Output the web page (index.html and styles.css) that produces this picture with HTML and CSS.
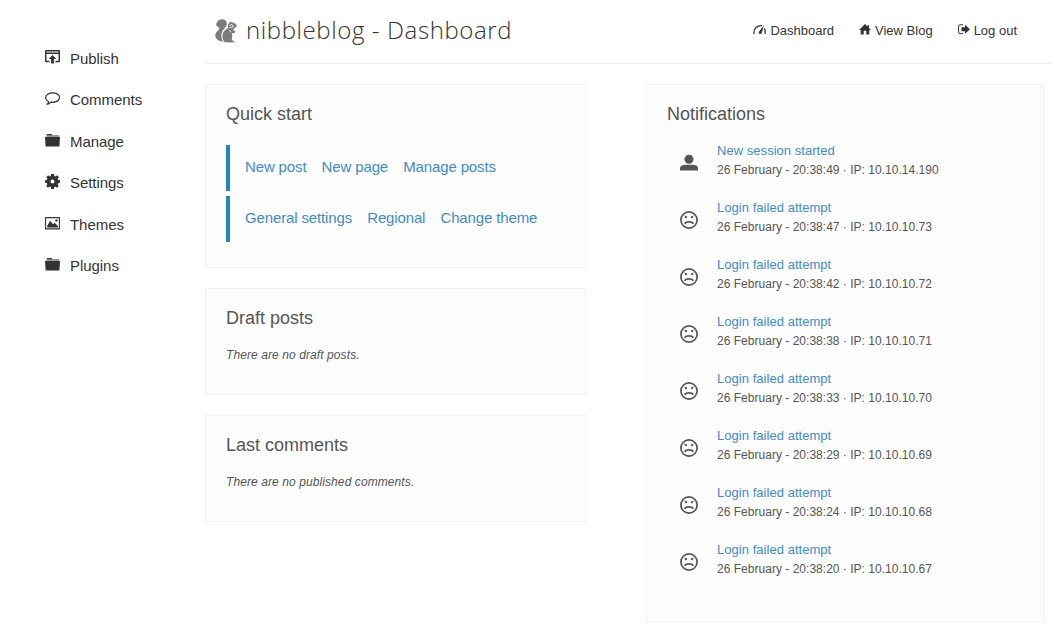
FILE: index.html
```html
<!DOCTYPE html>
<html lang="en">
<head>
<meta charset="utf-8">
<title>nibbleblog - Dashboard</title>
<link rel="stylesheet" href="styles.css">
</head>
<body>
<svg class="defs" aria-hidden="true">
  <symbol id="folder" viewBox="0 0 15 13"><path fill="#999" d="M1.500 2.500V1L2.200 0H6.500L7.300 1H13.800L14.300 1.500V3.500H1.500z"/><path d="M1.500 1.200L2.200 0H6.500L7.200 1.200zM0 3H15L14.400 12.500H.6z"/></symbol>
  <symbol id="sad" viewBox="0 0 18 18"><circle cx="9" cy="9" r="8.100" fill="none" stroke="currentColor" stroke-width="1.700"/><circle cx="6" cy="6.200" r="1.150"/><circle cx="12" cy="6.200" r="1.150"/><path d="M3.700 4.700l2 .8M14.300 4.700l-2 .8" stroke="currentColor" stroke-width=".6"/><path d="M4.800 12.800C6 10.200 12 10.200 13.200 12.800" fill="none" stroke="currentColor" stroke-width="1.600"/></symbol>
</svg>
<div class="layout">
  <nav class="sidebar">
    <a class="side-link"><svg class="side-icon raised" viewBox="0 0 15 14"><path fill="none" stroke="currentColor" stroke-width="1.500" d="M4.500 11.500H1.200Q.7 11.500.7 11V1.200Q.7.700 1.200.7H13.800Q14.300.7 14.300 1.200V11Q14.300 11.500 13.800 11.500H10.500M1 3.300H14"/><path d="M7.500 5L11.300 9H8.900V13.500H6.100V9H3.700z"/></svg>Publish</a>
    <a class="side-link"><svg class="side-icon" viewBox="0 0 15 14"><path fill="none" stroke="currentColor" stroke-width="1.200" d="M3.600 9.700C-.3 8-.2 4 2.800 2.200C6 .2 11 .5 13.300 2.700C15.300 4.700 14.600 8 11.700 9.400C9.900 10.300 7.700 10.400 5.900 10.200Q4.200 12.300 1.700 12.500Q3.500 11.400 3.600 9.700z"/></svg>Comments</a>
    <a class="side-link"><svg class="side-icon" viewBox="0 0 15 14"><use href="#folder" width="15" height="13" y="1"/></svg>Manage</a>
    <a class="side-link"><svg class="side-icon gear" viewBox="0 0 15 15"><path fill-rule="evenodd" d="M6 0H9L9.400 2L10.500 2.500L12.200 1.300L13.900 3.200L12.700 4.800L13.100 5.900L15 6.300V8.800L13.100 9.200L12.600 10.300L13.700 12L12 13.800L10.300 12.600L9.300 13L8.900 15H6.200L5.800 13L4.700 12.600L3 13.700L1.200 11.900L2.400 10.200L1.900 9.100L0 8.700V6.200L2 5.800L2.400 4.700L1.300 3L3.100 1.200L4.700 2.400L5.700 2zM7.500 5.500A2 2 0 1 0 7.500 9.500A2 2 0 1 0 7.500 5.500z"/></svg>Settings</a>
    <a class="side-link"><svg class="side-icon" viewBox="0 0 15 14"><path fill="none" stroke="currentColor" stroke-width="1.100" d="M.6 1.600H14.400V12.900H.6z"/><path d="M2.200 11.500V9.900L5.100 4.800L8 8.300L9.600 6.800L12.900 10V11.500z"/><circle cx="11.500" cy="4.400" r="1.200"/></svg>Themes</a>
    <a class="side-link"><svg class="side-icon" viewBox="0 0 15 14"><use href="#folder" width="15" height="13" y="1"/></svg>Plugins</a>
  </nav>
  <div class="page">
    <header class="header">
      <svg class="logo" viewBox="0 0 22 24"><path d="M6.500 22.500C3 21.500.3 19.500.2 16.500C.1 13.800 2.500 12.500 3.700 10.800C4.600 9.400 4.200 8.100 2.900 7.700C1.900 7.400 1.200 7.200 1.300 5.600C1.500 2.500 4 .3 7.200.3C10.500.3 12.200 2.600 11.700 5.600C11.200 8.700 7.400 11 6.600 14.500C6 17 6.300 19.500 8.200 22.700z"/><path d="M9.600 23.200C7.100 19.300 6.600 15.700 8.900 12.400C10.100 10.600 12 9.900 13.300 8.400C12.700 6 13.400 4.200 14.700 3.500L15.300 2.200L16.300 3.300C18.800 3.200 20.500 4.600 21.800 6.600C21.900 8.200 20.600 8.900 19.200 9L18.300 11L20.500 12.600L18.900 14.400L16.500 13.800C17.500 16.300 17.500 18.500 16.600 20.500L18.300 22L17.300 23.500z"/><path fill="none" stroke="#fff" stroke-width=".9" d="M14.500 6.500L16.800 5.500L18.300 7.300L16.500 8.300L14.400 8.700M14.300 11.500L16.300 12.400"/><circle cx="18.700" cy="22.800" r=".8"/></svg>
      <h1 class="title">nibbleblog - Dashboard</h1>
      <nav class="topnav">
        <a class="top-link"><svg class="top-icon speed" viewBox="0 0 13 11"><path fill="none" stroke="currentColor" stroke-width="1.300" d="M1 10Q.4 6 3 3.500Q5.500 1.200 9 1.600M11.400 4.300Q12.600 7 12 10"/><path d="M10.800 1.500L8.800 9Q7.800 10.600 6.400 9.700Q5.300 8.700 6.100 7.400z"/></svg>Dashboard</a>
        <a class="top-link"><svg class="top-icon" viewBox="0 0 12 11"><path d="M6 0L8.500 2.400V1.200H10V3.900L12 6H10.300V10.500H7.300V6.800H4.700V10.500H1.700V6H0z"/></svg>View Blog</a>
        <a class="top-link"><svg class="top-icon" viewBox="0 0 12 11"><path fill="none" stroke="currentColor" stroke-width="1" d="M5 .8H2Q.6.8.6 2.200V8.200Q.6 9.600 2 9.600H5"/><path d="M3.500 3.200H7V.7L12 5.200L7 9.700V7.200H3.500z"/></svg>Log out</a>
      </nav>
    </header>
    <main class="columns">
      <div class="left">
        <section class="panel quick">
          <h2 class="heading">Quick start</h2>
          <div class="shortcuts"><a>New post</a><a>New page</a><a>Manage posts</a></div>
          <div class="shortcuts"><a>General settings</a><a>Regional</a><a>Change theme</a></div>
        </section>
        <section class="panel small"><h2 class="heading">Draft posts</h2><p class="empty">There are no draft posts.</p></section>
        <section class="panel small"><h2 class="heading">Last comments</h2><p class="empty">There are no published comments.</p></section>
      </div>
      <section class="panel notifications">
        <h2 class="heading">Notifications</h2>
        <ul class="list">
          <li class="item"><svg class="item-icon" viewBox="0 0 18 18"><circle cx="9" cy="5.300" r="4.500"/><path d="M0 16.500V14.500C0 11.500 3 10.700 5.800 10.700H12.200C15 10.700 18 11.500 18 14.500V16.500z"/></svg><div><a class="event">New session started</a><p class="meta">26 February - 20:38:49 · IP: 10.10.14.190</p></div></li>
          <li class="item"><svg class="item-icon"><use href="#sad"/></svg><div><a class="event">Login failed attempt</a><p class="meta">26 February - 20:38:47 · IP: 10.10.10.73</p></div></li>
          <li class="item"><svg class="item-icon"><use href="#sad"/></svg><div><a class="event">Login failed attempt</a><p class="meta">26 February - 20:38:42 · IP: 10.10.10.72</p></div></li>
          <li class="item"><svg class="item-icon"><use href="#sad"/></svg><div><a class="event">Login failed attempt</a><p class="meta">26 February - 20:38:38 · IP: 10.10.10.71</p></div></li>
          <li class="item"><svg class="item-icon"><use href="#sad"/></svg><div><a class="event">Login failed attempt</a><p class="meta">26 February - 20:38:33 · IP: 10.10.10.70</p></div></li>
          <li class="item"><svg class="item-icon"><use href="#sad"/></svg><div><a class="event">Login failed attempt</a><p class="meta">26 February - 20:38:29 · IP: 10.10.10.69</p></div></li>
          <li class="item"><svg class="item-icon"><use href="#sad"/></svg><div><a class="event">Login failed attempt</a><p class="meta">26 February - 20:38:24 · IP: 10.10.10.68</p></div></li>
          <li class="item"><svg class="item-icon"><use href="#sad"/></svg><div><a class="event">Login failed attempt</a><p class="meta">26 February - 20:38:20 · IP: 10.10.10.67</p></div></li>
        </ul>
      </section>
    </main>
  </div>
</div>
</body>
</html>
```

FILE: styles.css
```css
* { box-sizing: border-box; }
body { margin: 0; background: #fff; color: #555; font-family: "Liberation Sans", Arial, sans-serif; }
h1, h2, p, ul { margin: 0; padding: 0; }
svg { fill: currentColor; flex: none; }
.defs { display: none; }
.layout { display: flex; height: 644px; overflow: hidden; }
.sidebar { width: 205px; flex: none; padding: 37.8px 0 0 45px; color: #333; }
.side-link { display: flex; align-items: center; height: 41.4px; font-size: 15px; line-height: 17px; gap: 10px; letter-spacing: -.05px; }
.side-icon { width: 15px; height: 14px; margin-bottom: 2px; }
.side-icon.raised { margin-bottom: 3px; }
.side-icon.gear { height: 15px; margin-bottom: 3px; }
.page { width: 847px; flex: none; }
.header { display: flex; height: 64px; border-bottom: 1px solid #eee; padding-left: 10px; color: #333; }
.logo { width: 22px; height: 24px; margin-top: 19px; color: #7c7c7c; }
.title { margin: 13px 0 0 9px; font: 300 24px/34px "Open Sans", sans-serif; letter-spacing: .6px; white-space: nowrap; }
.topnav { display: flex; gap: 25px; margin-left: auto; padding: 23px 35px 0 0; }
.top-link { display: flex; height: 15px; font-size: 13px; line-height: 15px; gap: 4px; white-space: nowrap; }
.top-icon { width: 12px; height: 11px; margin-top: 1px; }
.top-icon.speed { width: 13px; }
.columns { display: flex; align-items: flex-start; gap: 60px; padding-top: 20px; }
.left { display: flex; flex-direction: column; gap: 20px; width: 381px; }
.panel { padding: 18px 20px; border: 1px solid #f1f1f1; background: #fdfdfd; }
.quick { height: 184px; }
.small { height: 107px; }
.notifications { width: 398px; height: 538px; }
.heading { font-size: 18px; font-weight: 400; line-height: 22px; }
.shortcuts { display: flex; gap: 15.2px; height: 46px; margin-top: 5px; padding-left: 15px; border-left: 4px solid #2187c0; color: #428bca; font-size: 15px; line-height: 44px; letter-spacing: -.14px; }
.heading + .shortcuts { margin-top: 20px; }
.empty { margin-top: 18px; font-size: 12px; font-style: italic; line-height: 16px; letter-spacing: .09px; }
.list { list-style: none; margin-top: 16px; }
.item { display: flex; height: 57px; padding-left: 13px; gap: 19px; }
.item-icon { width: 18px; height: 18px; margin-top: 13px; }
.event { display: block; color: #428bca; font-size: 13px; line-height: 19px; letter-spacing: .04px; }
.meta { font-size: 12px; line-height: 21px; letter-spacing: .02px; }
```
